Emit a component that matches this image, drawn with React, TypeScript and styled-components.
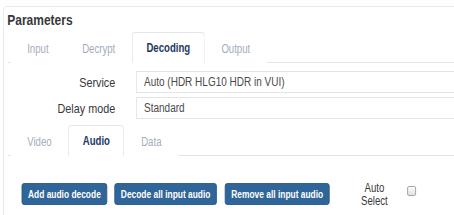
import React from 'react';
import styled, { createGlobalStyle } from 'styled-components';

// The reference uses a narrow face; we lay out at a wider width and squeeze it horizontally.
const SQUEEZE = 0.8;

const GlobalStyle = createGlobalStyle`
  html, body {
    margin: 0;
    padding: 0;
    background: #ffffff;
    overflow: hidden;
  }
  body {
    font-family: "Liberation Sans", Arial, sans-serif;
    color: #333333;
  }
`;

const Stage = styled.div`
  width: ${454 / SQUEEZE}px;
  transform: scaleX(${SQUEEZE});
  transform-origin: 0 0;
`;

const Panel = styled.div`
  margin: 6px -30px 0 4px;
  border: 1px solid #e7e7e7;
  border-radius: 4px;
  padding-top: 4px;
  height: 240px;
`;

const Title = styled.div`
  font-size: 15px;
  line-height: 17px;
  font-weight: bold;
  color: #383838;
  padding-left: 4px;
`;

const TabList = styled.div<{ $top: number }>`
  display: flex;
  align-items: flex-end;
  height: 30px;
  margin: ${p => p.$top}px 0 0 5px;
  padding-left: 3px;
  border-bottom: 1px solid #e5e5e5;
`;

const Tab = styled.div<{ $active?: boolean }>`
  height: ${p => (p.$active ? '30px' : '29px')};
  line-height: 30px;
  padding: 0 ${p => (p.$active ? 17 : 20)}px;
  font-size: 12px;
  font-weight: ${p => (p.$active ? 'bold' : 'normal')};
  color: ${p => (p.$active ? '#1d3a62' : '#a3acbd')};
  background: #ffffff;
  border: 1px solid ${p => (p.$active ? '#e6e6e6' : 'transparent')};
  border-bottom: none;
  border-radius: 4px 4px 0 0;
  margin-bottom: -1px;
`;

const Form = styled.div`
  display: flex;
  flex-direction: column;
  gap: 4px;
  margin-top: 8px;
`;

const Row = styled.div`
  display: flex;
  align-items: center;
`;

const Label = styled.div`
  width: 139px;
  margin-right: 26px;
  text-align: right;
  font-size: 13.5px;
  color: #383838;
`;

const Field = styled.div`
  flex: 1;
  height: 20px;
  line-height: 20px;
  border: 1px solid #e3e3e3;
  padding-left: 9px;
  font-size: 12.5px;
  color: #4a4a4a;
`;

const ButtonRow = styled.div`
  display: flex;
  align-items: center;
  margin-top: 24px;
  padding-left: 22px;
`;

const Button = styled.button<{ $gap?: number }>`
  height: 22px;
  padding: 0 7px;
  margin-right: ${p => p.$gap ?? 9}px;
  background: #2f6598;
  border: 1px solid #295985;
  border-radius: 3px;
  color: #ffffff;
  font-family: inherit;
  font-size: 10.5px;
  font-weight: bold;
  white-space: nowrap;
  cursor: pointer;
`;

const AutoSelect = styled.div`
  display: flex;
  align-items: center;
  margin-left: 27px;
`;

const AutoLabel = styled.div`
  width: 40px;
  font-size: 12px;
  line-height: 13px;
  color: #383838;
  text-align: center;
  margin-top: 2px;
`;

const Check = styled.span`
  display: inline-block;
  width: 9px;
  height: 8px;
  margin: -7px 0 0 21px;
  border: 1px solid #9c9c9c;
  border-radius: 2px;
  background: linear-gradient(#fdfdfd, #e0e0e0);
`;

export default function App() {
  return (
    <>
      <GlobalStyle />
      <Stage>
        <Panel>
          <Title>Parameters</Title>
          <TabList $top={4}>
            <Tab>Input</Tab>
            <Tab>Decrypt</Tab>
            <Tab $active>Decoding</Tab>
            <Tab>Output</Tab>
          </TabList>
          <Form>
            <Row>
              <Label>Service</Label>
              <Field>Auto (HDR HLG10 HDR in VUI)</Field>
            </Row>
            <Row>
              <Label>Delay mode</Label>
              <Field>Standard</Field>
            </Row>
          </Form>
          <TabList $top={6}>
            <Tab>Video</Tab>
            <Tab $active>Audio</Tab>
            <Tab>Data</Tab>
          </TabList>
          <ButtonRow>
            <Button>Add audio decode</Button>
            <Button $gap={10}>Decode all input audio</Button>
            <Button>Remove all input audio</Button>
            <AutoSelect>
              <AutoLabel>
                Auto
                <br />
                Select
              </AutoLabel>
              <Check />
            </AutoSelect>
          </ButtonRow>
        </Panel>
      </Stage>
    </>
  );
}
